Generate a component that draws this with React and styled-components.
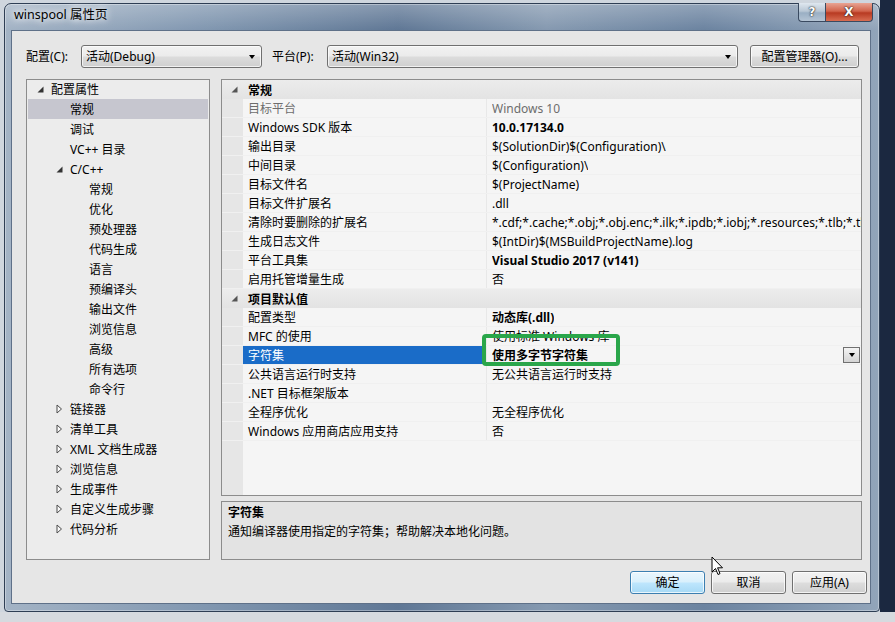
import React from "react";
import styled, { createGlobalStyle } from "styled-components";

const Global = createGlobalStyle`
  html, body { margin: 0; padding: 0; }
  body {
    width: 895px; height: 622px; overflow: hidden;
    font-family: "Noto Sans", "Noto Sans CJK SC", sans-serif;
    font-size: 12px; color: #000;
  }
  * { box-sizing: border-box; }
`;

const Desktop = styled.div`
  position: relative;
  width: 895px; height: 622px;
  padding: 3px 0 0 4px;
  background:
    linear-gradient(to bottom, transparent 612px, #d6dadf 612px),
    linear-gradient(to right, #cfd6de 880px, #1b2840 880px);
`;

const Window = styled.div`
  width: 876px; height: 609px;
  border: 1px solid #2e3e54;
  border-radius: 7px 7px 4px 4px;
  display: flex; flex-direction: column;
  padding: 0 8px 7px 6px;
  background:
    linear-gradient(180deg, rgba(255,255,255,0.25) 0, rgba(255,255,255,0) 26px),
    linear-gradient(90deg, #a3b3c5 0%, #8298b1 22%, #5f7795 45%, #8599b0 62%, #6b83a0 80%, #92a5ba 100%);
  box-shadow: inset 0 0 0 1px rgba(255,255,255,0.35);
`;

const TitleBar = styled.div`
  height: 26px; flex: none;
  display: flex; align-items: flex-start; justify-content: space-between;
  padding-left: 3px;
`;

const Title = styled.div`
  padding-top: 2px;
  line-height: 18px; font-size: 12.5px;
  color: #000;
  text-shadow: 0 0 6px #fff, 0 0 10px rgba(255,255,255,0.9);
`;

const Caption = styled.div`
  display: flex; margin-top: -1px; margin-right: -2px;
`;

const CapBtn = styled.div`
  width: ${p => p.$w}px; height: 19px;
  display: flex; align-items: center; justify-content: center;
  border: 1px solid #3a4a60;
  border-top: none;
  ${p => p.$first ? "border-radius: 0 0 0 4px; border-right: none;" : "border-radius: 0 0 4px 0;"}
  background: ${p => p.$red
    ? "linear-gradient(180deg, #e8a493 0%, #d2644c 45%, #b83a22 55%, #d86d52 100%)"
    : "linear-gradient(180deg, #dfe7ef 0%, #b9c7d5 45%, #9aafc4 55%, #b4c4d4 100%)"};
  color: #fff;
  font-family: "DejaVu Sans", sans-serif; font-weight: bold; font-size: 12px;
  text-shadow: 0 0 2px #222, 0 0 1px #000;
`;

const Client = styled.div`
  flex: 1;
  border: 1px solid #5f7189;
  background: #e6e6e6;
  padding: 14px 8px 0 14px;
  display: flex; flex-direction: column;
`;

const Toolbar = styled.div`
  height: 23px; display: flex; align-items: center;
  margin-bottom: 11px;
`;

const FieldLabel = styled.div`
  width: 55px; flex: none; line-height: 23px;
  margin-left: ${p => p.$ml || 0}px;
`;

const Combo = styled.div`
  width: ${p => p.$w}px; height: 23px; flex: none;
  border: 1px solid #707070; border-radius: 3px;
  background: linear-gradient(180deg, #f2f2f2 0%, #ebebeb 48%, #dcdcdc 52%, #cfcfcf 100%);
  box-shadow: inset 0 0 0 1px rgba(255,255,255,0.7);
  display: flex; align-items: center; justify-content: space-between;
  padding: 0 6px 0 4px;
  line-height: 21px;
`;

const Arrow = styled.span`
  width: 0; height: 0;
  border-left: 3.5px solid transparent;
  border-right: 3.5px solid transparent;
  border-top: 4px solid #000;
`;

const Button = styled.div`
  width: ${p => p.$w || 75}px; height: 23px; flex: none;
  margin-left: ${p => p.$ml || 0}px;
  border: 1px solid ${p => p.$focus ? "#3c7fb1" : "#707070"};
  border-radius: 3px;
  background: ${p => p.$focus
    ? "linear-gradient(180deg, #eaf6fd 0%, #d9f0fc 48%, #bee6fd 52%, #a7d9f5 100%)"
    : "linear-gradient(180deg, #f2f2f2 0%, #ebebeb 48%, #dddddd 52%, #cfcfcf 100%)"};
  box-shadow: inset 0 0 0 1px rgba(255,255,255,0.75);
  display: flex; align-items: center; justify-content: center;
  line-height: 21px;
`;

const Main = styled.div`
  height: 481px; display: flex; gap: 11px;
`;

const Tree = styled.div`
  width: 184px; flex: none;
  border: 1px solid #8c8c8c;
  background: #ececec;
  padding-top: 0;
`;

const TreeItem = styled.div`
  height: 20px; display: flex; align-items: center;
  padding-left: ${p => 7 + p.$lvl * 19}px;
  background: ${p => p.$sel ? "#c6c6cf" : "transparent"};
  margin: ${p => p.$first ? "-1px 1px 0" : "0 1px"};
  white-space: nowrap;
`;

const Toggle = styled.span`
  width: 16px; flex: none; display: flex; align-items: center;
  padding-left: 2px;
`;

const RightCol = styled.div`
  flex: 1; display: flex; flex-direction: column; gap: 5px;
`;

const Grid = styled.div`
  position: relative;
  height: 417px;
  border: 1px solid #8c8c8c;
  background: linear-gradient(to right, #e6e6e6 21px, #f5f5f5 21px);
  overflow: hidden;
`;

const HeaderRow = styled.div`
  height: 19px; display: flex; align-items: center;
  background: linear-gradient(180deg, #ececec, #e3e3e3);
  font-weight: bold;
`;

const HeaderToggle = styled.span`
  width: 26px; flex: none; display: flex; justify-content: flex-start;
  padding-left: 9px;
`;

const Row = styled.div`
  height: 19px;
  display: grid; grid-template-columns: 21px 244px 1fr;
  border-bottom: 1px solid #f0f0f0;
`;

const LabelCell = styled.div`
  padding-left: 5px; line-height: 19px;
  white-space: nowrap; overflow: hidden;
  background: ${p => p.$sel ? "#1a6cc8" : "transparent"};
  color: ${p => p.$sel ? "#fff" : p.$dim ? "#6d6d6d" : "#000"};
  border-right: 1px solid #e8e8e8;
`;

const ValueCell = styled.div`
  padding-left: 5px; line-height: 19px;
  white-space: nowrap; overflow: hidden;
  display: flex; align-items: center; justify-content: space-between;
  font-weight: ${p => p.$bold ? "bold" : "normal"};
  color: ${p => p.$dim ? "#6d6d6d" : "#000"};
`;

const ValueText = styled.span`
  overflow: hidden; white-space: nowrap; min-width: 0;
`;

const DropBtn = styled.span`
  width: 17px; height: 16px; flex: none; margin-right: 1px;
  border: 1px solid #707070;
  background: linear-gradient(180deg, #f4f4f4, #d4d4d4);
  display: flex; align-items: center; justify-content: center;
`;

const Highlight = styled.div`
  position: absolute;
  left: 260px; top: 254px; width: 138px; height: 32px;
  border: 4px solid #2aa64a;
  border-radius: 4px;
  pointer-events: none;
`;

const Desc = styled.div`
  height: 59px;
  border: 1px solid #8c8c8c;
  background: #e3e3e3;
  padding: 1px 6px;
  line-height: 19px;
`;

const DescTitle = styled.div`
  font-weight: bold;
`;

const Buttons = styled.div`
  display: flex; justify-content: flex-end; gap: 6px;
  margin-top: 11px; margin-right: -5px;
`;

const Cursor = styled.svg`
  position: absolute; left: 711px; top: 556px;
`;

const Expanded = ({ c = "#333" }) => (
  <svg width="7" height="7" viewBox="0 0 7 7"><polygon points="6.5,0.5 6.5,6.5 0.5,6.5" fill={c} /></svg>
);
const Collapsed = () => (
  <svg width="7" height="10" viewBox="0 0 7 10"><polygon points="1,1 5.5,5 1,9" fill="#fafafa" stroke="#4a4a4a" strokeWidth="1" /></svg>
);

const tree = [
  { t: "配置属性", l: 0, e: "o" },
  { t: "常规", l: 1, sel: true },
  { t: "调试", l: 1 },
  { t: "VC++ 目录", l: 1 },
  { t: "C/C++", l: 1, e: "o" },
  { t: "常规", l: 2 },
  { t: "优化", l: 2 },
  { t: "预处理器", l: 2 },
  { t: "代码生成", l: 2 },
  { t: "语言", l: 2 },
  { t: "预编译头", l: 2 },
  { t: "输出文件", l: 2 },
  { t: "浏览信息", l: 2 },
  { t: "高级", l: 2 },
  { t: "所有选项", l: 2 },
  { t: "命令行", l: 2 },
  { t: "链接器", l: 1, e: "c" },
  { t: "清单工具", l: 1, e: "c" },
  { t: "XML 文档生成器", l: 1, e: "c" },
  { t: "浏览信息", l: 1, e: "c" },
  { t: "生成事件", l: 1, e: "c" },
  { t: "自定义生成步骤", l: 1, e: "c" },
  { t: "代码分析", l: 1, e: "c" },
];

const sections = [
  {
    h: "常规",
    rows: [
      { k: "目标平台", v: "Windows 10", dim: true },
      { k: "Windows SDK 版本", v: "10.0.17134.0", b: true },
      { k: "输出目录", v: "$(SolutionDir)$(Configuration)\\" },
      { k: "中间目录", v: "$(Configuration)\\" },
      { k: "目标文件名", v: "$(ProjectName)" },
      { k: "目标文件扩展名", v: ".dll" },
      { k: "清除时要删除的扩展名", v: "*.cdf;*.cache;*.obj;*.obj.enc;*.ilk;*.ipdb;*.iobj;*.resources;*.tlb;*.tli;" },
      { k: "生成日志文件", v: "$(IntDir)$(MSBuildProjectName).log" },
      { k: "平台工具集", v: "Visual Studio 2017 (v141)", b: true },
      { k: "启用托管增量生成", v: "否" },
    ],
  },
  {
    h: "项目默认值",
    rows: [
      { k: "配置类型", v: "动态库(.dll)", b: true },
      { k: "MFC 的使用", v: "使用标准 Windows 库" },
      { k: "字符集", v: "使用多字节字符集", b: true, sel: true },
      { k: "公共语言运行时支持", v: "无公共语言运行时支持" },
      { k: ".NET 目标框架版本", v: "" },
      { k: "全程序优化", v: "无全程序优化" },
      { k: "Windows 应用商店应用支持", v: "否" },
    ],
  },
];

export default function App() {
  return (
    <>
      <Global />
      <Desktop>
        <Window>
          <TitleBar>
            <Title>winspool 属性页</Title>
            <Caption>
              <CapBtn $w={27} $first>?</CapBtn>
              <CapBtn $w={48} $red>X</CapBtn>
            </Caption>
          </TitleBar>
          <Client>
            <Toolbar>
              <FieldLabel>配置(C):</FieldLabel>
              <Combo $w={181}>活动(Debug)<Arrow /></Combo>
              <FieldLabel $ml={10}>平台(P):</FieldLabel>
              <Combo $w={411}>活动(Win32)<Arrow /></Combo>
              <Button $w={109} $ml={12}>配置管理器(O)...</Button>
            </Toolbar>
            <Main>
              <Tree>
                {tree.map((n, i) => (
                  <TreeItem key={i} $lvl={n.l} $sel={n.sel} $first={i === 0}>
                    <Toggle>{n.e === "o" ? <Expanded /> : n.e === "c" ? <Collapsed /> : null}</Toggle>
                    {n.t}
                  </TreeItem>
                ))}
              </Tree>
              <RightCol>
                <Grid>
                  {sections.map((s) => (
                    <React.Fragment key={s.h}>
                      <HeaderRow>
                        <HeaderToggle><Expanded c="#555" /></HeaderToggle>
                        {s.h}
                      </HeaderRow>
                      {s.rows.map((r) => (
                        <Row key={r.k}>
                          <span />
                          <LabelCell $sel={r.sel} $dim={r.dim}>{r.k}</LabelCell>
                          <ValueCell $bold={r.b} $dim={r.dim}>
                            <ValueText>{r.v}</ValueText>
                            {r.sel && <DropBtn><Arrow /></DropBtn>}
                          </ValueCell>
                        </Row>
                      ))}
                    </React.Fragment>
                  ))}
                  <Highlight />
                </Grid>
                <Desc>
                  <DescTitle>字符集</DescTitle>
                  <div>通知编译器使用指定的字符集；帮助解决本地化问题。</div>
                </Desc>
              </RightCol>
            </Main>
            <Buttons>
              <Button $focus>确定</Button>
              <Button>取消</Button>
              <Button>应用(A)</Button>
            </Buttons>
          </Client>
        </Window>
        <Cursor width="13" height="20" viewBox="0 0 13 20">
          <path d="M1 1 L1 16 L4.5 12.5 L7 18.5 L9 17.6 L6.6 11.8 L11.5 11.8 Z" fill="#fff" stroke="#000" strokeWidth="1" strokeLinejoin="round" />
        </Cursor>
      </Desktop>
    </>
  );
}
